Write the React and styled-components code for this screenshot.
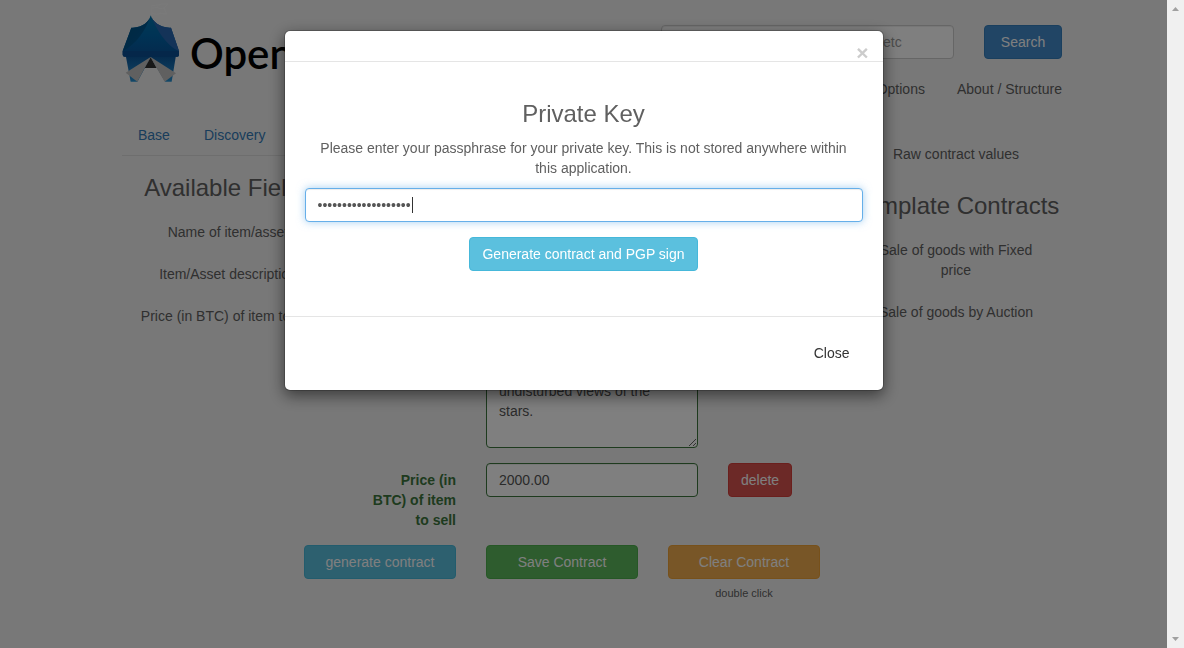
import React from "react";
import styled, { createGlobalStyle, css } from "styled-components";

const GlobalStyle = createGlobalStyle`
  *, *::before, *::after { box-sizing: border-box; }
  body {
    margin: 0;
    overflow: hidden;
    background: #f1f1f1;
    color: #606060;
    font-family: "Liberation Sans", Arial, sans-serif;
    font-size: 14px;
    line-height: 20px;
  }
  button, input, textarea { font: inherit; }
`;

const Page = styled.div`
  height: 100vh;
  overflow: hidden;
`;

const Container = styled.div`
  width: 100%;
  max-width: 970px;
  margin: 0 auto;
  padding: 0 15px;
`;

const Header = styled.header`
  display: flex;
  justify-content: space-between;
  min-height: 114px;
`;

const Brand = styled.a`
  display: flex;
  align-items: flex-start;
  gap: 10px;
  padding-top: 3px;
  color: #000;
  text-decoration: none;
`;

const BrandName = styled.span`
  padding-top: 24px;
  font-family: "Lato Semibold", Lato, sans-serif;
  font-size: 42px;
  font-weight: 600;
  line-height: 52px;
`;

const HeaderTools = styled.div`
  display: flex;
  flex-direction: column;
  align-items: flex-end;
  gap: 20px;
  padding-top: 25px;
`;

const SearchForm = styled.form`
  display: flex;
  gap: 30px;
`;

const field = css`
  display: block;
  width: 100%;
  padding: 6px 12px;
  border: 1px solid #ccc;
  border-radius: 4px;
  outline: 0;
  background: #fff;
  color: #555;
  line-height: 20px;
  box-shadow: inset 0 1px 1px rgba(0, 0, 0, 0.075);
`;

const SearchInput = styled.input`
  ${field}
  width: 293px;
  height: 34px;
  &::placeholder { color: #999; }
`;

const tones = {
  primary: ["#428bca", "#357ebd"],
  info: ["#5bc0de", "#46b8da"],
  success: ["#5cb85c", "#4cae4c"],
  warning: ["#f0ad4e", "#eea236"],
  danger: ["#d9534f", "#d43f3a"],
};

const Button = styled.button`
  height: 34px;
  padding: 6px 12px;
  border: 1px solid ${(p) => tones[p.$tone][1]};
  border-radius: 4px;
  background: ${(p) => tones[p.$tone][0]};
  color: #fff;
  line-height: 20px;
  white-space: nowrap;
  cursor: pointer;
`;

const SearchButton = styled(Button)`
  width: 78px;
`;

const TopNav = styled.nav`
  display: flex;
  gap: 32px;
`;

const NavLink = styled.a`
  color: inherit;
  text-decoration: none;
`;

const Body = styled.div`
  display: grid;
  grid-template-columns: minmax(0, 1fr) 212px;
  gap: 30px;
`;

const Tabs = styled.nav`
  display: flex;
  gap: 2px;
  border-bottom: 1px solid #ddd;
`;

const Tab = styled.a`
  padding: 11px 16px 10px;
  color: #337ab7;
  text-decoration: none;
`;

const Columns = styled.div`
  display: grid;
  grid-template-columns: 212px minmax(0, 1fr);
  gap: 30px;
`;

const Heading = styled.h3`
  margin: 0;
  padding: 19px 0 14px;
  font-size: 24px;
  font-weight: 400;
  line-height: 26px;
  text-align: center;
`;

const Sidebar = styled.aside`
  padding-top: 23px;
`;

const ItemList = styled.div`
  display: flex;
  flex-direction: column;
  gap: 8px;
`;

const Item = styled.button`
  width: 100%;
  padding: 7px ${(p) => (p.$narrow ? 24 : 12)}px;
  border: 0;
  background: none;
  color: inherit;
  line-height: 20px;
  text-align: center;
  cursor: pointer;
`;

const RawValues = styled(Item)`
  margin-bottom: 3px;
`;

const Fields = styled.div`
  display: flex;
  flex-direction: column;
  gap: 15px;
  padding-top: 69px;
`;

const FieldRow = styled.div`
  display: grid;
  grid-template-columns: 92px 212px auto;
  justify-content: start;
  align-items: start;
  gap: 30px;
`;

const FieldLabel = styled.label`
  padding-top: 7px;
  color: #3c763d;
  font-weight: 700;
  text-align: right;
`;

const TextInput = styled.input`
  ${field}
  height: 34px;
  border-color: #3c763d;
`;

const TextArea = styled.textarea`
  ${field}
  border-color: #3c763d;
  resize: vertical;
  overflow: auto;
`;

const Actions = styled.div`
  display: grid;
  grid-template-columns: repeat(3, 152px);
  justify-content: end;
  gap: 30px;
  padding-top: 15px;
  text-align: center;
`;

const Action = styled.div`
  display: flex;
  flex-direction: column;
  gap: 4px;
`;

const Hint = styled.small`
  font-size: 11px;
  color: #606060;
`;

const Overlay = styled.div`
  position: fixed;
  inset: 0;
  display: flex;
  background: rgba(0, 0, 0, 0.5);
`;

const OverlayArea = styled.div`
  flex: 1;
  min-width: 0;
  padding: 30px 10px;
`;

const Dialog = styled.section`
  max-width: 600px;
  margin: 0 auto;
  border: 1px solid rgba(0, 0, 0, 0.2);
  border-radius: 6px;
  background: #fff;
  background-clip: padding-box;
  box-shadow: 0 5px 15px rgba(0, 0, 0, 0.5);
`;

const DialogHeader = styled.header`
  display: flex;
  justify-content: flex-end;
  height: 31px;
  padding: 12px 14px 0;
  border-bottom: 1px solid #e5e5e5;
`;

const Dismiss = styled.button`
  padding: 0;
  border: 0;
  background: none;
  color: #ccc;
  font-size: 21px;
  font-weight: 700;
  line-height: 20px;
  cursor: pointer;
`;

const DialogBody = styled.form`
  display: flex;
  flex-direction: column;
  align-items: center;
  padding: 19px 20px 45px;
  text-align: center;
`;

const DialogTitle = styled.h3`
  margin: 20px 0 11px;
  font-size: 24px;
  font-weight: 400;
  line-height: 26px;
`;

const Prompt = styled.label`
  margin-bottom: 10px;
  padding: 0 8px;
`;

const PassphraseBox = styled.div`
  position: relative;
  width: 100%;
  margin-bottom: 15px;
`;

const Passphrase = styled.input`
  ${field}
  height: 34px;
  border-color: #66afe9;
  caret-color: transparent;
  box-shadow: inset 0 1px 1px rgba(0, 0, 0, 0.075), 0 0 8px rgba(102, 175, 233, 0.6);
`;

const Caret = styled.span`
  position: absolute;
  top: 9px;
  left: 107px;
  width: 1px;
  height: 16px;
  background: #333;
`;

const DialogFooter = styled.footer`
  display: flex;
  justify-content: flex-end;
  padding: 19px 20px 20px;
  border-top: 1px solid #e5e5e5;
`;

const CloseButton = styled.button`
  height: 34px;
  padding: 6px 13px;
  border: 0;
  background: none;
  color: #333;
  line-height: 20px;
  cursor: pointer;
`;

const ScrollTrack = styled.div`
  display: flex;
  flex-direction: column;
  justify-content: space-between;
  align-items: center;
  width: 17px;
  padding: 7px 0;
  background: #f0f0f0;
`;

function TentLogo() {
  return (
    <svg width="58" height="80" viewBox="36 9 174 240" aria-hidden="true">
      <defs>
        <linearGradient id="roof" x1="0" y1="0" x2="0" y2="1">
          <stop offset="0" stopColor="#0075ae" />
          <stop offset="0.5" stopColor="#0066aa" />
          <stop offset="1" stopColor="#0a5299" />
        </linearGradient>
        <linearGradient id="roofLeft" x1="0" y1="0" x2="1" y2="1">
          <stop offset="0" stopColor="#00507e" />
          <stop offset="1" stopColor="#005a9c" />
        </linearGradient>
        <linearGradient id="wall" x1="0" y1="0" x2="0" y2="1">
          <stop offset="0" stopColor="#0a5498" />
          <stop offset="1" stopColor="#2690d0" />
        </linearGradient>
      </defs>
      <path d="M125 45V16M126 17l20 -2 10 -3 18 0 -12 12 8 18 -18 -2 -12 3 -14 -3M128 24l14 -2 8 4 12 -2" fill="none" stroke="#fff" strokeOpacity="0.35" strokeWidth="2" />
      <path d="M47 166H198L185 245H62Z" fill="url(#wall)" />
      <path d="M122 46C118 65 96 85 64 83L38 153V164Q38 170 44 170H202Q207 170 207 164V153L183 83C151 85 128 65 122 46Z" fill="url(#roof)" />
      <path d="M122 46C118 65 96 85 64 83L38 153C76 136 108 92 122 46Z" fill="url(#roofLeft)" />
      <path d="M122 46C128 65 151 85 183 83L207 153C171 139 140 91 122 46Z" fill="#2866b0" />
      <path d="M38 153H207V164Q207 170 202 170H44Q38 170 38 164Z" fill="#0a4f94" />
      <path d="M122 171L82 246H166Z" fill="#f1f1f1" />
      <path d="M122 172L104 204H140Z" fill="#303030" />
      <path d="M122 171L47 218L82 245L104 204Z" fill="#c0c0c0" />
      <path d="M122 171L198 220L164 245L140 204Z" fill="#c0c0c0" />
    </svg>
  );
}

function ScrollArrow({ down }) {
  return (
    <svg width="7" height="4" viewBox="0 0 7 4" aria-hidden="true">
      <path d={down ? "M0 0H7L3.500 4Z" : "M0 4H7L3.500 0Z"} fill="#a0a0a0" />
    </svg>
  );
}

const availableFields = ["Name of item/asset", "Item/Asset description", "Price (in BTC) of item to sell"];
const templates = ["Sale of goods with Fixed price", "Sale of goods by Auction"];
const description =
  "Private island retreat\nwith its own harbour,\na stone house, fruit\ntrees, quiet beaches\nand, every night,\nundisturbed views of the\nstars.";

export default function App() {
  return (
    <>
      <GlobalStyle />
      <Page>
        <Container>
          <Header>
            <Brand href="#home">
              <TentLogo />
              <BrandName>OpenBazaar</BrandName>
            </Brand>
            <HeaderTools>
              <SearchForm>
                <SearchInput type="search" aria-label="Search" placeholder="Enter nickname, key, contract ID, etc" />
                <SearchButton type="button" $tone="primary">Search</SearchButton>
              </SearchForm>
              <TopNav>
                <NavLink href="#options">Options</NavLink>
                <NavLink href="#about">About / Structure</NavLink>
              </TopNav>
            </HeaderTools>
          </Header>
          <Body>
            <main>
              <Tabs>
                <Tab href="#base">Base</Tab>
                <Tab href="#discovery">Discovery</Tab>
              </Tabs>
              <Columns>
                <div>
                  <Heading>Available Fields</Heading>
                  <ItemList>
                    {availableFields.map((name) => (
                      <Item key={name} type="button">{name}</Item>
                    ))}
                  </ItemList>
                </div>
                <Fields>
                  <FieldRow>
                    <FieldLabel htmlFor="name">Name</FieldLabel>
                    <TextInput id="name" defaultValue="Island" />
                  </FieldRow>
                  <FieldRow>
                    <FieldLabel htmlFor="description">Item/Asset description</FieldLabel>
                    <TextArea id="description" rows={8} defaultValue={description} />
                  </FieldRow>
                  <FieldRow>
                    <FieldLabel htmlFor="price">Price (in BTC) of item to sell</FieldLabel>
                    <TextInput id="price" defaultValue="2000.00" />
                    <Button type="button" $tone="danger">delete</Button>
                  </FieldRow>
                </Fields>
              </Columns>
              <Actions>
                <Action>
                  <Button type="button" $tone="info">generate contract</Button>
                </Action>
                <Action>
                  <Button type="button" $tone="success">Save Contract</Button>
                </Action>
                <Action>
                  <Button type="button" $tone="warning">Clear Contract</Button>
                  <Hint>double click</Hint>
                </Action>
              </Actions>
            </main>
            <Sidebar>
              <RawValues type="button">Raw contract values</RawValues>
              <Heading>Template Contracts</Heading>
              <ItemList>
                {templates.map((name) => (
                  <Item key={name} type="button" $narrow>{name}</Item>
                ))}
              </ItemList>
            </Sidebar>
          </Body>
        </Container>
      </Page>
      <Overlay>
        <OverlayArea>
          <Dialog role="dialog" aria-modal="true" aria-labelledby="dialog-title">
            <DialogHeader>
              <Dismiss type="button" aria-label="Close">×</Dismiss>
            </DialogHeader>
            <DialogBody>
              <DialogTitle id="dialog-title">Private Key</DialogTitle>
              <Prompt htmlFor="passphrase">
                Please enter your passphrase for your private key. This is not stored anywhere within this application.
              </Prompt>
              <PassphraseBox>
                <Passphrase id="passphrase" type="password" defaultValue="correcthorsebattery" autoFocus />
                <Caret aria-hidden="true" />
              </PassphraseBox>
              <Button type="button" $tone="info">Generate contract and PGP sign</Button>
            </DialogBody>
            <DialogFooter>
              <CloseButton type="button">Close</CloseButton>
            </DialogFooter>
          </Dialog>
        </OverlayArea>
        <ScrollTrack aria-hidden="true">
          <ScrollArrow />
          <ScrollArrow down />
        </ScrollTrack>
      </Overlay>
    </>
  );
}
